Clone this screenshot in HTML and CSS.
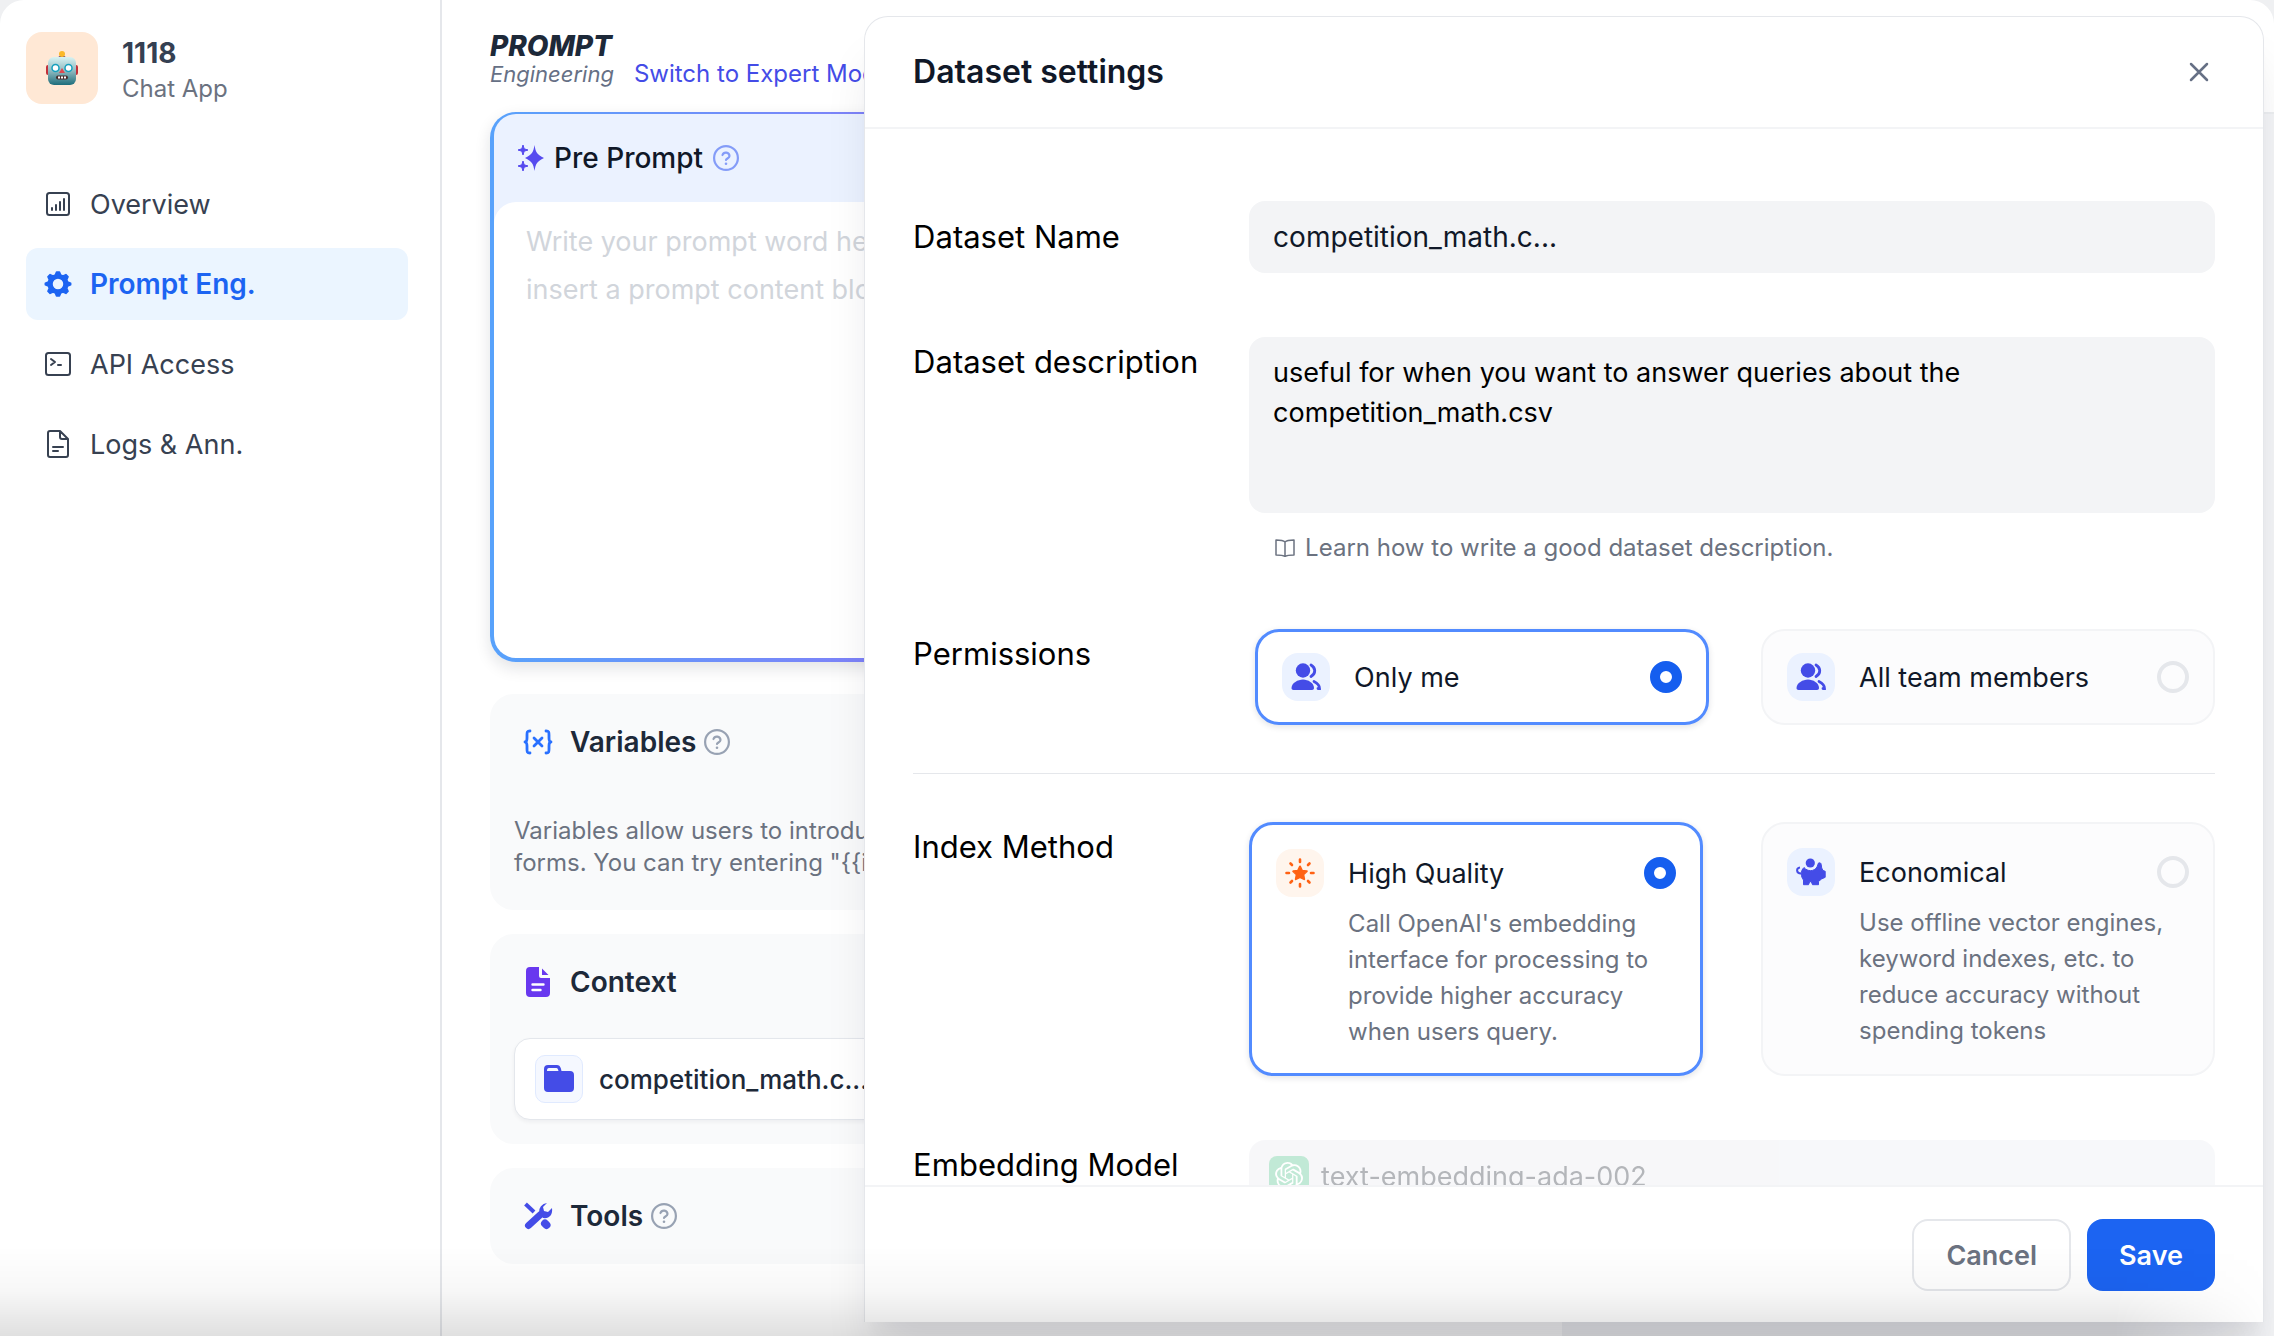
FILE: index.html
```html
<!DOCTYPE html>
<html lang="en">
<head>
<meta charset="utf-8">
<title>Dataset settings</title>
<link rel="stylesheet" href="styles.css">
</head>
<body>
<svg class="sprite" aria-hidden="true">
  <symbol id="help" viewBox="0 0 26 26"><g fill="none" stroke="currentColor" stroke-width="2.200" stroke-linecap="round"><circle cx="13" cy="13" r="11.900"/><path d="M9.500 10a3.600 3.600 0 0 1 7 1c0 2.200-3.500 2.600-3.500 4"/></g><circle cx="13" cy="18.800" r="1.300" fill="currentColor"/></symbol>
  <symbol id="users" viewBox="0 0 30 28"><g fill="currentColor"><circle cx="12" cy="7.500" r="7.200"/><path d="M12 16.500c5 0 11 3.500 11 8.500 0 1.200-.8 2-2 2H2.500c-1.200 0-2-.8-2-2 0-5 6.500-8.500 11.500-8.500z"/></g><g fill="none" stroke="currentColor" stroke-width="2.800" stroke-linecap="round"><path d="M20 2c5 3 5 8.500 0 11.500M23 18.500c3 1.500 5.500 3.500 5.500 7h-1.500"/></g></symbol>
</svg>
<div class="app">
  <aside class="sidebar">
    <div class="app-info">
      <div class="app-icon">
        <svg width="32" height="34" viewBox="0 0 32 34"><defs><linearGradient id="rb" x1="0" y1="0" x2="0" y2="1"><stop offset="0" stop-color="#d8f3f3"/><stop offset=".5" stop-color="#8fb9bf"/><stop offset="1" stop-color="#1d6d7b"/></linearGradient></defs><rect x="0" y="14" width="4" height="10" rx="2" fill="#c2303a"/><rect x="28" y="14" width="4" height="10" rx="2" fill="#c2303a"/><path d="M12 7c0-3 8-3 8 0z" fill="#5a3d78"/><circle cx="16" cy="3" r="3" fill="#fbb829"/><rect x="2" y="6" width="28" height="28" rx="6" fill="url(#rb)"/><g fill="#fff" stroke="#17a0bd" stroke-width="1.500"><circle cx="9.500" cy="17" r="3.500"/><circle cx="22.500" cy="17" r="3.500"/></g><path d="M16 17l3 5h-6z" fill="#e0484f"/><rect x="10" y="24.500" width="12" height="4" rx="2" fill="#4a2c2c"/><path d="M12 26.500h8" stroke="#fff" stroke-width="2" stroke-dasharray="2 1"/></svg>
      </div>
      <div>
        <div class="app-name">1118</div>
        <div class="app-type">Chat App</div>
      </div>
    </div>
    <nav class="nav">
      <a href="#overview"><svg viewBox="0 0 28 28" fill="none" stroke="currentColor" stroke-width="2" stroke-linecap="round"><rect x="3" y="3" width="22" height="22" rx="2.500"/><path d="M8 20v-2M12 20v-5M16 20v-8M20 20V9"/></svg>Overview</a>
      <a href="#prompt" class="active" aria-current="page"><svg viewBox="0 0 28 28"><path fill="currentColor" stroke="currentColor" stroke-width="1.500" stroke-linejoin="round" fill-rule="evenodd" d="M12.500 2h3l1.200 3 2.200.9 3-1.300 2.200 2.200-1.300 3 .9 2.200 3 1.200v1.600l-3 1.200-.9 2.200 1.300 3-2.200 2.200-3-1.300-2.200.9-1.200 3h-3l-1.200-3-2.200-.9-3 1.300-2.200-2.200 1.300-3-.9-2.200-3-1.200v-1.600l3-1.200.9-2.200-1.300-3 2.200-2.200 3 1.300 2.200-.9zM14 8a6 6 0 1 0 0 12a6 6 0 1 0 0-12z"/></svg>Prompt Eng.</a>
      <a href="#api"><svg viewBox="0 0 28 28" fill="none" stroke="currentColor" stroke-width="2" stroke-linecap="round" stroke-linejoin="round"><rect x="2" y="3" width="24" height="22" rx="2.500"/><path d="M7 9l4 3-4 3M14 15h3"/></svg>API Access</a>
      <a href="#logs"><svg viewBox="0 0 28 28" fill="none" stroke="currentColor" stroke-width="2" stroke-linecap="round" stroke-linejoin="round"><path d="M6 1h10l8 8v16a2 2 0 0 1-2 2H6a2 2 0 0 1-2-2V3a2 2 0 0 1 2-2zM16 1v6a2 2 0 0 0 2 2h6M9 17h10M9 21h5"/></svg>Logs &amp; Ann.</a>
    </nav>
  </aside>
  <main class="main">
    <header class="prompt-head">
      <div class="logo"><b>PROMPT</b><i>Engineering</i></div>
      <a href="#expert">Switch to Expert Mode</a>
    </header>
    <section class="pre-prompt">
      <h2><svg width="26" height="26" viewBox="0 0 26 26" fill="#564bef"><path d="M16.500 0c1.200 7.500 2.500 9.500 9.500 13-7 3.500-8.300 5.500-9.500 13C15.300 18.500 14 16.500 7 13c7-3.500 8.300-5.500 9.500-13z"/><path stroke="#564bef" d="M5 0l1.200 3.800L10 5 6.200 6.200 5 10 3.800 6.200 0 5l3.800-1.200zM5 16l1.200 3.800L10 21l-3.800 1.200L5 26l-1.200-3.800L0 21l3.800-1.200z"/></svg>Pre Prompt<svg class="help blue" width="26" height="26"><use href="#help"/></svg></h2>
      <textarea aria-label="Pre Prompt" placeholder="Write your prompt word here,&#10;insert a prompt content block"></textarea>
    </section>
    <section class="card variables">
      <h3><svg width="32" height="28" viewBox="0 0 32 28" fill="none" stroke="#2970ff" stroke-width="2.800" stroke-linecap="round" stroke-linejoin="round"><path d="M8 3C5 3 5 4 5 7v3c0 3-1 4-2 4 1 0 2 1 2 4v3c0 3 0 4 3 4M24 3c3 0 3 1 3 4v3c0 3 1 4 2 4-1 0-2 1-2 4v3c0 3 0 4-3 4M12 10l8 8M20 10l-8 8"/></svg>Variables<svg class="help" width="26" height="26"><use href="#help"/></svg></h3>
      <p>Variables allow users to introduce<br>forms. You can try entering "{{input</p>
    </section>
    <section class="card context">
      <h3><svg width="32" height="30" viewBox="0 0 32 30"><path fill="#6938ef" d="M8 0h9v9a2 2 0 0 0 2 2h9v15a4 4 0 0 1-4 4H8a4 4 0 0 1-4-4V4a4 4 0 0 1 4-4zM20 1.500L26.500 8H20z"/><path d="M10.500 17.500h11M10.500 23h8" stroke="#fff" stroke-width="2.400" stroke-linecap="round"/></svg>Context</h3>
      <div class="dataset"><span class="folder"><svg width="30" height="28" viewBox="0 0 30 28"><path fill="#444ce7" fill-rule="evenodd" d="M4 0h9c3 0 4 3 4.500 6H26a4 4 0 0 1 4 4v13a4 4 0 0 1-4 4H4a4 4 0 0 1-4-4V4a4 4 0 0 1 4-4zM3 6h11.500C14 4 13.500 3 12.500 3H5C3.500 3 3 4 3 6z"/></svg></span>competition_math.c...</div>
    </section>
    <section class="card tools">
      <h3><svg width="32" height="28" viewBox="0 0 32 28" fill="none" stroke="#444ce7" stroke-linecap="round"><path stroke-width="4" stroke-linecap="butt" d="M3.500 2l8.500 8"/><path stroke-width="7" d="M6.500 23.500L18 13"/><path stroke-width="8" d="M23 21.500l1.500 1.500"/><path fill="#444ce7" stroke="none" d="M25 1a9 9 0 0 0-8 10l4 5c6 1 10-3 9-10l-4 4-4-1-1-4z"/></svg>Tools<svg class="help" width="26" height="26"><use href="#help"/></svg></h3>
    </section>
  </main>
  <aside class="preview"></aside>
</div>

<div class="drawer" role="dialog" aria-labelledby="drawer-title">
  <header class="drawer-head">
    <h1 id="drawer-title">Dataset settings</h1>
    <button class="close" type="button" aria-label="Close"><svg width="20" height="20" viewBox="0 0 20 20" stroke="#667085" stroke-width="2.500" stroke-linecap="round"><path d="M2 2l16 16M18 2L2 18"/></svg></button>
  </header>
  <form class="drawer-body">
    <div class="row name-row">
      <label for="ds-name">Dataset Name</label>
      <input class="field" id="ds-name" type="text" value="competition_math.c...">
    </div>
    <div class="row desc-row">
      <label for="ds-desc">Dataset description</label>
      <div class="desc">
        <textarea class="field" id="ds-desc">useful for when you want to answer queries about the competition_math.csv</textarea>
        <a class="learn" href="#learn"><svg width="20" height="18" viewBox="0 0 20 18" fill="none" stroke="currentColor" stroke-width="1.500" stroke-linejoin="round"><path d="M10 3C8 1 5 1 1 1v15c4 0 7 0 9 1.500 2-1.500 5-1.500 9-1.500V1c-4 0-7 0-9 2zM10 3v14"/></svg>Learn how to write a good dataset description.</a>
      </div>
    </div>
    <div class="row perm-row" role="radiogroup" aria-labelledby="perm">
      <span class="row-label" id="perm">Permissions</span>
      <div class="options inset">
        <label class="option selected"><span class="badge"><svg width="30" height="28"><use href="#users"/></svg></span><span class="title">Only me</span><input type="radio" name="perm" checked></label>
        <label class="option"><span class="badge"><svg width="30" height="28"><use href="#users"/></svg></span><span class="title">All team members</span><input type="radio" name="perm"></label>
      </div>
    </div>
    <hr>
    <div class="row index-row" role="radiogroup" aria-labelledby="index">
      <span class="row-label" id="index">Index Method</span>
      <div class="options">
        <label class="option tall selected"><span class="badge orange"><svg width="30" height="30" viewBox="0 0 30 30"><path fill="#ff6214" stroke="#ff6214" stroke-width="2" stroke-linejoin="round" d="M15 8.500l2 4.200 4.800.6-3.500 3.200.9 4.700L15 19l-4.200 2.200.9-4.700-3.500-3.200 4.800-.6z"/><path stroke="#ff6214" stroke-width="2.600" stroke-linecap="round" d="M15 1.500v2.500M15 26v2.500M1.500 15H4M26 15h2.500M5.500 5.500l1.500 1.500M23 23l1.500 1.500M5.500 24.500L7 23M23 7l1.500-1.500"/></svg></span><span class="title">High Quality</span><input type="radio" name="index" checked><span class="note">Call OpenAI's embedding interface for processing to provide higher accuracy when users query.</span></label>
        <label class="option tall"><span class="badge"><svg width="30" height="28" viewBox="0 0 30 28"><g fill="#444ce7"><circle cx="14.300" cy="5" r="4.600"/><path stroke="#444ce7" stroke-linejoin="round" d="M8 9.500c3.500 4.300 10 4.300 13-.5l1.500-4C24 4.500 25 5 25.200 6.500L25.700 10l1.300 2.500 2.200.8v6L25.500 21 22.500 23.500v3.200h-6l-1.200-3h-1.600l-1.200 3h-5V22C5 19 4 13 8 9.500z"/></g><path d="M4 9.500C0 10 0 15.500 5 15.500" fill="none" stroke="#444ce7" stroke-width="2"/></svg></span><span class="title">Economical</span><input type="radio" name="index"><span class="note">Use offline vector engines, keyword indexes, etc. to reduce accuracy without spending tokens</span></label>
      </div>
    </div>
    <div class="row model-row">
      <span class="row-label">Embedding Model</span>
      <button class="model" type="button" disabled><svg width="40" height="40" viewBox="0 0 40 40"><rect width="40" height="40" rx="8" fill="#85d5ae"/><path transform="translate(6 6) scale(1.170)" fill="#fff" d="M22.2819 9.8211a5.9847 5.9847 0 0 0-.5157-4.9108 6.0462 6.0462 0 0 0-6.5098-2.9A6.0651 6.0651 0 0 0 4.9807 4.1818a5.9847 5.9847 0 0 0-3.9977 2.9 6.0462 6.0462 0 0 0 .7427 7.0966 5.98 5.98 0 0 0 .511 4.9107 6.051 6.051 0 0 0 6.5146 2.9001A5.9847 5.9847 0 0 0 13.2599 24a6.0557 6.0557 0 0 0 5.7718-4.2058 5.9894 5.9894 0 0 0 3.9977-2.9001 6.0557 6.0557 0 0 0-.7475-7.0729zm-9.022 12.6081a4.4755 4.4755 0 0 1-2.8764-1.0408l.1419-.0804 4.7783-2.7582a.7948.7948 0 0 0 .3927-.6813v-6.7369l2.02 1.1686a.071.071 0 0 1 .038.052v5.5826a4.504 4.504 0 0 1-4.4945 4.4944zm-9.6607-4.1254a4.4708 4.4708 0 0 1-.5346-3.0137l.142.0852 4.783 2.7582a.7712.7712 0 0 0 .7806 0l5.8428-3.3685v2.3324a.0804.0804 0 0 1-.0332.0615L9.74 19.9502a4.4992 4.4992 0 0 1-6.1408-1.6464zM2.3408 7.8956a4.485 4.485 0 0 1 2.3655-1.9728V11.6a.7664.7664 0 0 0 .3879.6765l5.8144 3.3543-2.0201 1.1685a.0757.0757 0 0 1-.071 0l-4.8303-2.7865A4.504 4.504 0 0 1 2.3408 7.872zm16.5963 3.8558L13.1038 8.364 15.1192 7.2a.0757.0757 0 0 1 .071 0l4.8303 2.7913a4.4944 4.4944 0 0 1-.6765 8.1042v-5.6772a.79.79 0 0 0-.407-.667zm2.0107-3.0231l-.142-.0852-4.7735-2.7818a.7759.7759 0 0 0-.7854 0L9.409 9.2297V6.8974a.0662.0662 0 0 1 .0284-.0615l4.8303-2.7866a4.4992 4.4992 0 0 1 6.6802 4.66zM8.3065 12.863l-2.02-1.1638a.0804.0804 0 0 1-.038-.0567V6.0742a4.4992 4.4992 0 0 1 7.3757-3.4537l-.142.0805L8.704 5.459a.7948.7948 0 0 0-.3927.6813zm1.0976-2.3654l2.602-1.4998 2.6069 1.4998v2.9994l-2.5974 1.4997-2.6067-1.4997Z"/></svg>text-embedding-ada-002</button>
    </div>
  </form>
  <footer class="drawer-foot">
    <button class="btn cancel" type="button">Cancel</button>
    <button class="btn primary" type="button">Save</button>
  </footer>
</div>
<div class="bottom-shade"></div>
</body>
</html>
```
FILE: styles.css
```css
* { box-sizing: border-box; }
body {
  margin: 0;
  height: 100vh;
  overflow: hidden;
  background: #eff0f2;
  font-family: Inter, "Noto Sans", sans-serif;
  font-size: 27px;
  color: #101828;
}
h1, h2, h3, p { margin: 0; }
a { color: inherit; text-decoration: none; }
button, input, textarea { font: inherit; color: inherit; }
textarea { resize: none; }
.sprite { position: absolute; width: 0; height: 0; }

.app {
  display: flex;
  height: 100vh;
  background: #fff;
  border-radius: 24px 24px 0 0;
  overflow: hidden;
}
.sidebar {
  flex: none;
  width: 442px;
  padding: 32px 32px 0 26px;
  border-right: 2px solid #e5e7eb;
}
.app-info { display: flex; align-items: center; gap: 24px; height: 72px; }
.app-icon {
  display: grid;
  place-items: center;
  width: 72px;
  height: 72px;
  border-radius: 16px;
  background: #ffe8d5;
}
.app-name {
  padding-top: 2px;
  font-size: 28px;
  font-weight: 700;
  line-height: 40px;
  color: #354052;
}
.app-type { font-size: 24px; line-height: 32px; color: #6b7280; }
.nav { display: grid; gap: 8px; margin-top: 64px; }
.nav a {
  display: flex;
  align-items: center;
  gap: 18px;
  height: 72px;
  padding-left: 18px;
  border-radius: 12px;
  color: #374151;
}
.nav svg { width: 28px; height: 28px; }
.nav .active { background: #ebf5ff; color: #1c64f2; font-size: 28px; font-weight: 600; }

.main { flex: 1; min-width: 0; padding: 32px 24px 0 48px; }
.preview {
  flex: none;
  width: 712px;
  margin-top: 112px;
  border-top: 2px solid #eceef0;
  background: #f3f4f6;
}
.prompt-head { display: flex; align-items: flex-end; gap: 20px; height: 56px; }
.logo { font-family: Inter, sans-serif; font-style: italic; }
.logo b, .logo i { display: block; }
.logo b { font-size: 28px; line-height: 28px; font-weight: 800; color: #1d2939; }
.logo i { font-size: 22px; line-height: 28px; color: #667085; }
.prompt-head a { font-size: 24px; line-height: 28px; color: #444ce7; }
.pre-prompt {
  margin-top: 24px;
  padding: 2px 4px 4px;
  border-radius: 26px;
  background: linear-gradient(90deg, #58a2fb, #8080f8 400px, #8f7df5);
  box-shadow: 0 6px 16px rgba(16, 24, 40, .12);
}
.pre-prompt h2 {
  display: flex;
  align-items: center;
  gap: 10px;
  height: 112px;
  padding: 0 24px 24px;
  border-radius: 22px 22px 0 0;
  background: #ebf2ff;
  font-size: 28px;
  font-weight: 500;
}
.help { color: #98a2b3; }
.help.blue { color: #849cf8; }
.pre-prompt textarea {
  display: block;
  width: 100%;
  height: 456px;
  margin-top: -24px;
  padding: 16px 32px;
  border: 0;
  border-radius: 22px;
  background: #fff;
  line-height: 48px;
}
.pre-prompt textarea::placeholder { color: #d1d5db; }
.card { border-radius: 24px; background: #f9fafb; padding: 24px; margin-top: 24px; }
.card h3 {
  display: flex;
  align-items: center;
  height: 48px;
  padding-left: 8px;
  font-size: 28px;
  font-weight: 600;
  color: #1d2939;
}
.card h3 svg:first-child { margin-right: 16px; }
.card .help { margin-left: 8px; }
.variables { margin-top: 32px; height: 216px; }
.variables p {
  margin-top: 49px;
  font-size: 24px;
  line-height: 32px;
  color: #6b7280;
}
.context { height: 210px; }
.dataset {
  display: flex;
  align-items: center;
  gap: 16px;
  height: 82px;
  margin-top: 32px;
  padding: 0 20px;
  border: 1px solid #e4e7ec;
  border-radius: 16px;
  background: #fff;
  box-shadow: 0 2px 4px rgba(16, 24, 40, .05);
  font-size: 26px;
  font-weight: 500;
  color: #1d2939;
}
.folder {
  display: grid;
  place-items: center;
  width: 48px;
  height: 48px;
  border: 1px solid #e0eaff;
  border-radius: 10px;
  background: #f5f8ff;
}
.tools { height: 96px; }

/* slide-over panel above the workspace */
.drawer {
  position: absolute;
  top: 16px;
  right: 10px;
  bottom: 14px;
  left: 38%;
  display: flex;
  flex-direction: column;
  border: 1px solid #e5e7eb;
  border-bottom: 0;
  border-radius: 24px 24px 0 0;
  background: #fff;
  box-shadow: 0 40px 48px -8px rgba(16, 24, 40, .1), 0 16px 16px -8px rgba(16, 24, 40, .04);
}
.drawer-head {
  flex: none;
  display: flex;
  align-items: center;
  justify-content: space-between;
  height: 112px;
  padding: 0 48px;
  border-bottom: 2px solid #f3f4f6;
}
.drawer-head h1 { font-size: 32px; font-weight: 600; line-height: 40px; }
.close { display: grid; padding: 6px; border: 0; background: none; }
.drawer-body {
  flex: 1;
  min-height: 0;
  overflow: hidden;
  padding: 72px 48px 0;
}
.row { display: grid; grid-template-columns: 336px minmax(0, 1fr); }
.row > label, .row-label { font-size: 31px; line-height: 50px; color: #000; }
.field {
  width: 100%;
  border: 0;
  border-radius: 16px;
  background: #f3f4f6;
  padding: 0 24px;
}
.name-row { align-items: center; }
.name-row .field { height: 72px; font-size: 28px; }
.desc-row { margin-top: 64px; }
.desc-row .field {
  display: block;
  height: 176px;
  padding: 16px 24px;
  line-height: 40px;
  color: #000;
}
.learn {
  display: flex;
  align-items: center;
  gap: 10px;
  margin-top: 17px;
  padding-left: 26px;
  font-size: 24px;
  line-height: 36px;
  color: #6b7280;
}
.perm-row { margin-top: 63px; }
.options { display: grid; grid-template-columns: 1fr 1fr; gap: 58px; }
.options.inset { gap: 52px; padding-left: 6px; }
.option {
  display: grid;
  grid-template-columns: 48px 1fr 32px;
  column-gap: 24px;
  align-items: center;
  align-content: center;
  height: 96px;
  padding: 0 24px;
  border: 2px solid #f3f4f6;
  border-radius: 24px;
  background: #fcfcfd;
}
.option.selected {
  border: 3px solid #528bff;
  background: #fff;
  box-shadow: 0 2px 6px rgba(16, 24, 40, .12);
}
.option.tall { height: 254px; align-content: start; padding-top: 24px; }
.badge {
  display: grid;
  place-items: center;
  width: 48px;
  height: 48px;
  border-radius: 16px;
  background: #ebf2ff;
  color: #444ce7;
}
.badge.orange { background: #fff5ed; }
.option input {
  appearance: none;
  width: 32px;
  height: 32px;
  margin: 0;
  border: 4px solid #e5e7eb;
  border-radius: 50%;
}
.option input:checked { border: 10px solid #155eef; background: #fff; }
.note {
  grid-column: 2 / -1;
  margin-top: 9px;
  font-size: 24px;
  line-height: 36px;
  color: #6b7280;
}
hr { height: 1px; margin: 48px 0; border: 0; background: #e5e7eb; }
.model-row { margin-top: 64px; }
.model {
  display: flex;
  align-items: center;
  gap: 12px;
  height: 72px;
  padding: 0 20px;
  border: 0;
  border-radius: 16px;
  background: #f0f1f5;
  color: #6b7078;
  opacity: .5;
}
.drawer-foot {
  flex: none;
  display: flex;
  justify-content: flex-end;
  gap: 16px;
  height: 137px;
  padding: 32px 48px;
  border-top: 2px solid #f3f4f6;
}
.btn {
  height: 72px;
  padding: 0 30px;
  border: 2px solid #e5e7eb;
  border-radius: 16px;
  background: #fff;
  font-weight: 600;
  color: #6b7280;
}
.btn.cancel { padding: 0 32px; }
.btn.primary { border-color: #1c64f2; background: #1c64f2; color: #fff; }

/* shade along the lower window edge */
.bottom-shade {
  position: absolute;
  right: 0;
  bottom: 0;
  left: 0;
  height: 90px;
  pointer-events: none;
  background: linear-gradient(rgba(0, 0, 0, 0), rgba(0, 0, 0, .03) 50%, rgba(0, 0, 0, .12));
  mask-image: linear-gradient(90deg, #000 calc(100% - 160px), transparent);
}
```
